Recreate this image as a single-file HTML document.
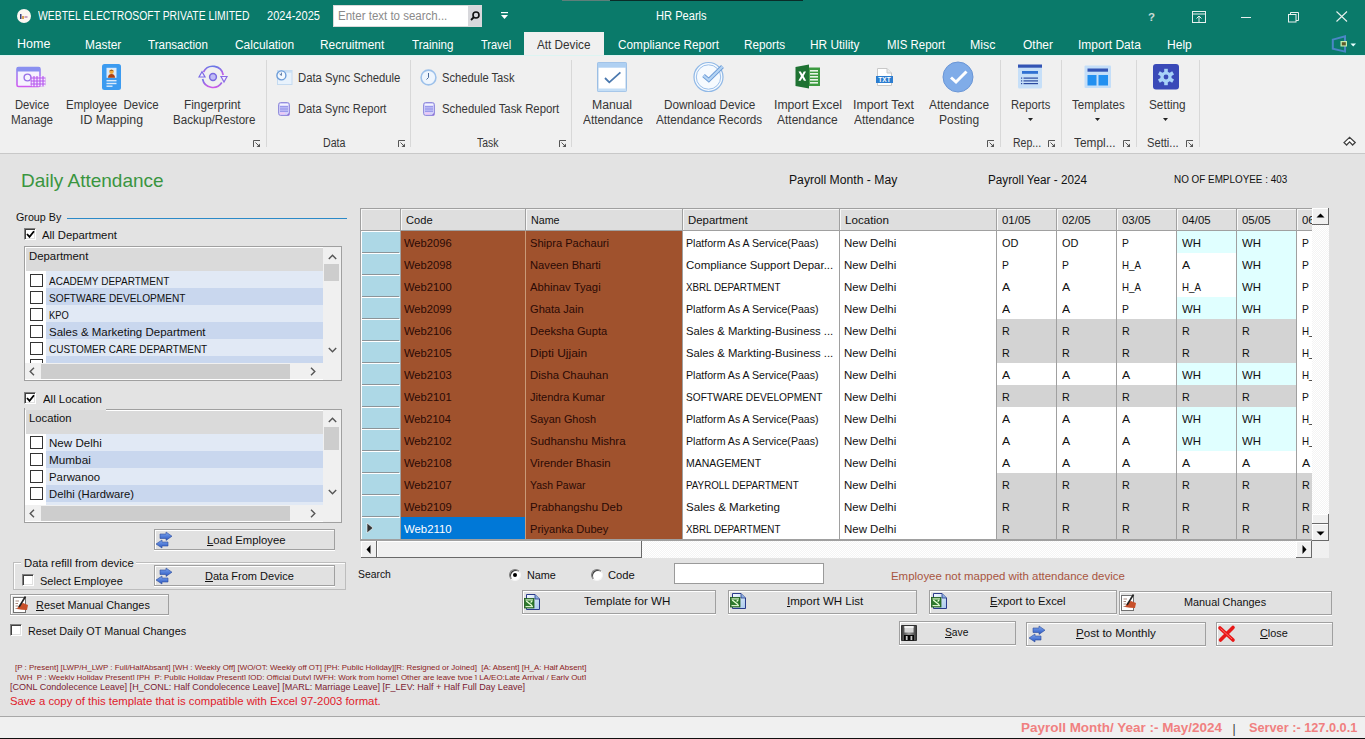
<!DOCTYPE html>
<html><head><meta charset="utf-8"><style>
html,body{margin:0;padding:0;}
body{width:1365px;height:739px;position:relative;overflow:hidden;background:#E3E3E3;font-family:"Liberation Sans",sans-serif;}
.a{position:absolute;box-sizing:border-box;}
.t{position:absolute;white-space:pre;line-height:1;transform-origin:0 0;}
u{text-decoration:underline;text-underline-offset:1px;}
svg{position:absolute;overflow:visible;}
</style></head><body>
<div class="a" style="left:0px;top:0px;width:1365px;height:55px;background:#0A7A6A;"></div>
<div class="a" style="left:562px;top:0px;width:48px;height:1px;background:#5E7F7A;"></div>
<div class="a" style="left:610px;top:0px;width:193px;height:1px;background:#0A2C28;"></div>
<div class="a" style="left:17px;top:9px;width:14px;height:14px;border-radius:50%;background:#FBF7F2;"></div>
<svg style="left:17px;top:9px" width="14" height="14"><rect x="3" y="5" width="1.5" height="5" fill="#3A3F7A"/><rect x="5" y="7" width="2" height="3" fill="#D9A050"/><rect x="7.5" y="7" width="3" height="2" fill="#C8A0C0"/></svg>
<div class="t" style="left:37.80px;top:10.18px;font-size:12.5px;color:#FFFFFF;transform:scaleX(0.8310);">WEBTEL ELECTROSOFT PRIVATE LIMITED</div>
<div class="t" style="left:267.00px;top:10.18px;font-size:12.5px;color:#FFFFFF;transform:scaleX(0.8859);">2024-2025</div>
<div class="a" style="left:333px;top:5px;width:149px;height:22px;background:#fff;border:1px solid #DADADA;"></div>
<div class="t" style="left:338.00px;top:10.30px;font-size:12px;color:#8A8A8A;transform:scaleX(0.9585);">Enter text to search...</div>
<div class="a" style="left:468px;top:6px;width:14px;height:20px;background:#D8D8DC;"></div>
<svg style="left:469px;top:10px" width="12" height="12"><circle cx="7" cy="5" r="3" fill="none" stroke="#111" stroke-width="1.6"/><line x1="5" y1="7" x2="2" y2="10" stroke="#111" stroke-width="1.8"/></svg>
<svg style="left:500px;top:12px" width="10" height="8"><rect x="1" y="0" width="7" height="1.2" fill="#fff"/><path d="M1 3 L8 3 L4.5 7 Z" fill="#fff"/></svg>
<div class="t" style="left:655.91px;top:10.38px;font-size:12.5px;color:#FFFFFF;transform:scaleX(0.8886);">HR Pearls</div>
<div class="t" style="left:1148.00px;top:11.72px;font-size:11.5px;color:#C8DAD6;font-weight:bold;transform:scaleX(1.0000);">?</div>
<svg style="left:1192px;top:11px" width="14" height="12"><rect x="0.5" y="0.5" width="13" height="11" fill="none" stroke="#E8F0EE" stroke-width="1"/><line x1="0.5" y1="3" x2="13.5" y2="3" stroke="#E8F0EE"/><line x1="7" y1="11" x2="7" y2="5" stroke="#E8F0EE"/><path d="M4.5 7.5 L7 5 L9.5 7.5" fill="none" stroke="#E8F0EE"/></svg>
<div class="a" style="left:1241px;top:17px;width:10px;height:1px;background:#E8F0EE;"></div>
<svg style="left:1288px;top:12px" width="11" height="11"><rect x="0.5" y="2.5" width="7.5" height="7.5" fill="none" stroke="#E8F0EE"/><path d="M2.5 2.5 V0.5 H10.5 V8.5 H8" fill="none" stroke="#E8F0EE"/></svg>
<svg style="left:1336px;top:11px" width="12" height="11"><path d="M0.5 0.5 L11 10.5 M11 0.5 L0.5 10.5" stroke="#E8F0EE" stroke-width="1.1"/></svg>
<div class="t" style="left:16.60px;top:38.38px;font-size:12.5px;color:#FFFFFF;transform:scaleX(1.0003);">Home</div>
<div class="t" style="left:84.75px;top:39.38px;font-size:12.5px;color:#FFFFFF;transform:scaleX(0.9503);">Master</div>
<div class="t" style="left:147.70px;top:39.38px;font-size:12.5px;color:#FFFFFF;transform:scaleX(0.9246);">Transaction</div>
<div class="t" style="left:234.70px;top:39.38px;font-size:12.5px;color:#FFFFFF;transform:scaleX(0.9549);">Calculation</div>
<div class="t" style="left:319.65px;top:39.38px;font-size:12.5px;color:#FFFFFF;transform:scaleX(0.9535);">Recruitment</div>
<div class="t" style="left:412.00px;top:39.38px;font-size:12.5px;color:#FFFFFF;transform:scaleX(0.9275);">Training</div>
<div class="t" style="left:481.00px;top:39.38px;font-size:12.5px;color:#FFFFFF;transform:scaleX(0.8809);">Travel</div>
<div class="t" style="left:617.60px;top:39.38px;font-size:12.5px;color:#FFFFFF;transform:scaleX(0.9431);">Compliance Report</div>
<div class="t" style="left:744.36px;top:39.38px;font-size:12.5px;color:#FFFFFF;transform:scaleX(0.9384);">Reports</div>
<div class="t" style="left:810.45px;top:39.38px;font-size:12.5px;color:#FFFFFF;transform:scaleX(0.9512);">HR Utility</div>
<div class="t" style="left:886.58px;top:39.38px;font-size:12.5px;color:#FFFFFF;transform:scaleX(0.9165);">MIS Report</div>
<div class="t" style="left:970.41px;top:39.38px;font-size:12.5px;color:#FFFFFF;transform:scaleX(0.9902);">Misc</div>
<div class="t" style="left:1022.50px;top:39.38px;font-size:12.5px;color:#FFFFFF;transform:scaleX(0.9582);">Other</div>
<div class="t" style="left:1077.84px;top:39.38px;font-size:12.5px;color:#FFFFFF;transform:scaleX(0.9619);">Import Data</div>
<div class="t" style="left:1166.93px;top:39.38px;font-size:12.5px;color:#FFFFFF;transform:scaleX(0.9654);">Help</div>
<div class="a" style="left:524px;top:32px;width:80px;height:23px;background:#F0F0F0;"></div>
<div class="t" style="left:537.20px;top:39.38px;font-size:12.5px;color:#333;transform:scaleX(0.9384);">Att Device</div>
<svg style="left:1331px;top:35px" width="28" height="18"><path d="M1.8 4.6 L14 1.2 L14 16.6 L1.8 13.8 Z" fill="none" stroke="#4A86C6" stroke-width="2"/><rect x="9.5" y="6" width="6.5" height="5.5" fill="#C4EEB0"/><rect x="10.8" y="7.2" width="4" height="3.2" fill="#5E5A2A"/><path d="M19.5 8.5 L25 8.5 L22.2 11.5 Z" fill="#E8FFFF"/></svg>
<div class="a" style="left:0px;top:55px;width:1365px;height:98px;background:#F0F0F0;"></div>
<div class="a" style="left:0px;top:153px;width:1365px;height:1px;background:#C8C8C8;"></div>
<div class="a" style="left:0px;top:55px;width:1365px;height:1px;background:#DCF4F2;"></div>
<div class="a" style="left:265.5px;top:60px;width:1px;height:87px;background:#D8D8D8;"></div>
<div class="a" style="left:410px;top:60px;width:1px;height:87px;background:#D8D8D8;"></div>
<div class="a" style="left:571px;top:60px;width:1px;height:87px;background:#D8D8D8;"></div>
<div class="a" style="left:999.5px;top:60px;width:1px;height:87px;background:#D8D8D8;"></div>
<div class="a" style="left:1061px;top:60px;width:1px;height:87px;background:#D8D8D8;"></div>
<div class="a" style="left:1135.5px;top:60px;width:1px;height:87px;background:#D8D8D8;"></div>
<div class="a" style="left:1198.5px;top:60px;width:1px;height:87px;background:#D8D8D8;"></div>
<svg style="left:253px;top:140px" width="8" height="8"><path d="M0.5 7 V0.5 H7" fill="none" stroke="#555" stroke-width="1"/><path d="M2.5 2.5 L6 6" stroke="#555" stroke-width="1"/><path d="M3.5 7 H7 V3.5 Z" fill="#555"/></svg>
<svg style="left:398px;top:140px" width="8" height="8"><path d="M0.5 7 V0.5 H7" fill="none" stroke="#555" stroke-width="1"/><path d="M2.5 2.5 L6 6" stroke="#555" stroke-width="1"/><path d="M3.5 7 H7 V3.5 Z" fill="#555"/></svg>
<svg style="left:559px;top:140px" width="8" height="8"><path d="M0.5 7 V0.5 H7" fill="none" stroke="#555" stroke-width="1"/><path d="M2.5 2.5 L6 6" stroke="#555" stroke-width="1"/><path d="M3.5 7 H7 V3.5 Z" fill="#555"/></svg>
<svg style="left:986.5px;top:140px" width="8" height="8"><path d="M0.5 7 V0.5 H7" fill="none" stroke="#555" stroke-width="1"/><path d="M2.5 2.5 L6 6" stroke="#555" stroke-width="1"/><path d="M3.5 7 H7 V3.5 Z" fill="#555"/></svg>
<svg style="left:1048px;top:140px" width="8" height="8"><path d="M0.5 7 V0.5 H7" fill="none" stroke="#555" stroke-width="1"/><path d="M2.5 2.5 L6 6" stroke="#555" stroke-width="1"/><path d="M3.5 7 H7 V3.5 Z" fill="#555"/></svg>
<svg style="left:1123px;top:140px" width="8" height="8"><path d="M0.5 7 V0.5 H7" fill="none" stroke="#555" stroke-width="1"/><path d="M2.5 2.5 L6 6" stroke="#555" stroke-width="1"/><path d="M3.5 7 H7 V3.5 Z" fill="#555"/></svg>
<svg style="left:1186px;top:140px" width="8" height="8"><path d="M0.5 7 V0.5 H7" fill="none" stroke="#555" stroke-width="1"/><path d="M2.5 2.5 L6 6" stroke="#555" stroke-width="1"/><path d="M3.5 7 H7 V3.5 Z" fill="#555"/></svg>
<div class="t" style="left:14.60px;top:98.70px;font-size:12px;color:#363636;transform:scaleX(0.9296);">Device</div>
<div class="t" style="left:10.60px;top:113.70px;font-size:12px;color:#363636;transform:scaleX(0.9704);">Manage</div>
<div class="t" style="left:66.30px;top:98.70px;font-size:12px;color:#363636;transform:scaleX(0.9574);">Employee  Device</div>
<div class="t" style="left:80.07px;top:113.70px;font-size:12px;color:#363636;transform:scaleX(1.0269);">ID Mapping</div>
<div class="t" style="left:184.40px;top:98.70px;font-size:12px;color:#363636;transform:scaleX(0.9875);">Fingerprint</div>
<div class="t" style="left:172.50px;top:113.70px;font-size:12px;color:#363636;transform:scaleX(0.9650);">Backup/Restore</div>
<div class="t" style="left:297.50px;top:72.20px;font-size:12px;color:#363636;transform:scaleX(0.9417);">Data Sync Schedule</div>
<div class="t" style="left:297.50px;top:102.60px;font-size:12px;color:#363636;transform:scaleX(0.9342);">Data Sync Report</div>
<div class="t" style="left:322.80px;top:137.10px;font-size:12px;color:#363636;transform:scaleX(0.8881);">Data</div>
<div class="t" style="left:442.40px;top:72.20px;font-size:12px;color:#363636;transform:scaleX(0.9311);">Schedule Task</div>
<div class="t" style="left:442.40px;top:102.60px;font-size:12px;color:#363636;transform:scaleX(0.9468);">Scheduled Task Report</div>
<div class="t" style="left:476.80px;top:137.10px;font-size:12px;color:#363636;transform:scaleX(0.8647);">Task</div>
<div class="t" style="left:592.00px;top:98.90px;font-size:12px;color:#363636;transform:scaleX(1.0183);">Manual</div>
<div class="t" style="left:582.60px;top:113.90px;font-size:12px;color:#363636;transform:scaleX(0.9895);">Attendance</div>
<div class="t" style="left:663.60px;top:98.90px;font-size:12px;color:#363636;transform:scaleX(0.9786);">Download Device</div>
<div class="t" style="left:656.00px;top:113.90px;font-size:12px;color:#363636;transform:scaleX(0.9767);">Attendance Records</div>
<div class="t" style="left:773.78px;top:98.90px;font-size:12px;color:#363636;transform:scaleX(1.0182);">Import Excel</div>
<div class="t" style="left:777.30px;top:113.90px;font-size:12px;color:#363636;transform:scaleX(1.0010);">Attendance</div>
<div class="t" style="left:853.17px;top:98.90px;font-size:12px;color:#363636;transform:scaleX(1.0302);">Import Text</div>
<div class="t" style="left:854.20px;top:113.90px;font-size:12px;color:#363636;transform:scaleX(0.9961);">Attendance</div>
<div class="t" style="left:928.50px;top:98.90px;font-size:12px;color:#363636;transform:scaleX(0.9911);">Attendance</div>
<div class="t" style="left:938.60px;top:113.90px;font-size:12px;color:#363636;transform:scaleX(1.0012);">Posting</div>
<div class="t" style="left:1010.60px;top:98.80px;font-size:12px;color:#363636;transform:scaleX(0.9353);">Reports</div>
<div class="t" style="left:1012.50px;top:136.70px;font-size:12px;color:#363636;transform:scaleX(0.8775);">Rep...</div>
<div class="t" style="left:1071.90px;top:98.80px;font-size:12px;color:#363636;transform:scaleX(0.9636);">Templates</div>
<div class="t" style="left:1073.80px;top:136.70px;font-size:12px;color:#363636;transform:scaleX(0.9885);">Templ...</div>
<div class="t" style="left:1148.50px;top:98.80px;font-size:12px;color:#363636;transform:scaleX(0.9813);">Setting</div>
<div class="t" style="left:1147.40px;top:136.70px;font-size:12px;color:#363636;transform:scaleX(0.9293);">Setti...</div>
<svg style="left:1027.5px;top:118px" width="6" height="4"><path d="M0 0 H5 L2.5 3 Z" fill="#222"/></svg>
<svg style="left:1094.5px;top:118px" width="6" height="4"><path d="M0 0 H5 L2.5 3 Z" fill="#222"/></svg>
<svg style="left:1162.5px;top:118px" width="6" height="4"><path d="M0 0 H5 L2.5 3 Z" fill="#222"/></svg>
<svg style="left:1340px;top:133px" width="20" height="16"><path d="M4 9.6 L9.6 4.3 L15.2 9.6 L12.6 12 L9.6 8.9 L6.6 12 Z" fill="#fff" stroke="#404040" stroke-width="1.3"/></svg>
<div class="t" style="left:20.77px;top:172.08px;font-size:18.5px;color:#3A953F;transform:scaleX(1.0269);">Daily Attendance</div>
<div class="t" style="left:789.40px;top:174.00px;font-size:12px;color:#111;transform:scaleX(1.0150);">Payroll Month - May</div>
<div class="t" style="left:987.50px;top:174.00px;font-size:12px;color:#111;transform:scaleX(0.9760);">Payroll Year - 2024</div>
<div class="t" style="left:1174.40px;top:174.22px;font-size:11.5px;color:#111;transform:scaleX(0.8594);">NO OF EMPLOYEE : 403</div>
<div class="t" style="left:16.20px;top:212.22px;font-size:11.5px;color:#111;transform:scaleX(0.9319);">Group By</div>
<div class="a" style="left:67px;top:218px;width:280px;height:1px;background:#2C8AC8;"></div>
<div class="a" style="left:24px;top:228px;width:12px;height:12px;background:#fff;border-top:1px solid #808080;border-left:1px solid #808080;border-bottom:1px solid #fff;border-right:1px solid #fff;box-shadow:inset 1px 1px 0 #404040, inset -1px -1px 0 #E0E0E0;"></div>
<svg style="left:26px;top:230px" width="9" height="9"><path d="M1 4 L3.5 6.8 L8 1.2" fill="none" stroke="#000" stroke-width="1.8"/></svg>
<div class="t" style="left:42.40px;top:230.22px;font-size:11.5px;color:#111;transform:scaleX(0.9836);">All Department</div>
<div class="a" style="left:24px;top:246px;width:318px;height:135px;background:#fff;border:1px solid #A0A0A0;"></div>
<div class="a" style="left:26px;top:248px;width:297px;height:23px;background:#DADADA;"></div>
<div class="t" style="left:28.80px;top:250.72px;font-size:11.5px;color:#111;transform:scaleX(0.9871);">Department</div>
<div class="a" style="left:46px;top:271px;width:277px;height:17px;background:#E1E9F5;"></div>
<div class="a" style="left:30px;top:274px;width:13px;height:13px;background:#fff;border:1px solid #333;"></div>
<div class="t" style="left:48.60px;top:275.73px;font-size:11.5px;color:#111;transform:scaleX(0.8712);">ACADEMY DEPARTMENT</div>
<div class="a" style="left:46px;top:288px;width:277px;height:17px;background:#C9D7EE;"></div>
<div class="a" style="left:30px;top:291px;width:13px;height:13px;background:#fff;border:1px solid #333;"></div>
<div class="t" style="left:48.60px;top:292.73px;font-size:11.5px;color:#111;transform:scaleX(0.8817);">SOFTWARE DEVELOPMENT</div>
<div class="a" style="left:46px;top:305px;width:277px;height:17px;background:#E1E9F5;"></div>
<div class="a" style="left:30px;top:308px;width:13px;height:13px;background:#fff;border:1px solid #333;"></div>
<div class="t" style="left:48.60px;top:309.73px;font-size:11.5px;color:#111;transform:scaleX(0.8134);">KPO</div>
<div class="a" style="left:46px;top:322px;width:277px;height:17px;background:#C9D7EE;"></div>
<div class="a" style="left:30px;top:325px;width:13px;height:13px;background:#fff;border:1px solid #333;"></div>
<div class="t" style="left:48.60px;top:326.73px;font-size:11.5px;color:#111;transform:scaleX(0.9993);">Sales &amp; Marketing Department</div>
<div class="a" style="left:46px;top:339px;width:277px;height:17px;background:#E1E9F5;"></div>
<div class="a" style="left:30px;top:342px;width:13px;height:13px;background:#fff;border:1px solid #333;"></div>
<div class="t" style="left:48.60px;top:343.73px;font-size:11.5px;color:#111;transform:scaleX(0.8689);">CUSTOMER CARE DEPARTMENT</div>
<div class="a" style="left:46px;top:356px;width:277px;height:7px;background:#C9D7EE;"></div>
<div class="a" style="left:30px;top:359px;width:13px;height:4px;background:#fff;border:1px solid #333;border-bottom:0;"></div>
<div class="a" style="left:323px;top:247px;width:18px;height:117px;background:#F0F0F0;"></div>
<div class="a" style="left:324px;top:264px;width:15px;height:17px;background:#CDCDCD;"></div>
<svg style="left:328px;top:254px" width="9" height="6"><path d="M0.8 5 L4.5 1.2 L8.2 5" fill="none" stroke="#555" stroke-width="1.4"/></svg>
<svg style="left:328px;top:347px" width="9" height="6"><path d="M0.8 1 L4.5 4.8 L8.2 1" fill="none" stroke="#555" stroke-width="1.4"/></svg>
<div class="a" style="left:25px;top:363px;width:298px;height:16px;background:#F0F0F0;"></div>
<div class="a" style="left:41px;top:364px;width:249px;height:15px;background:#CDCDCD;"></div>
<div class="a" style="left:323px;top:363px;width:18px;height:17px;background:#F0F0F0;"></div>
<svg style="left:29px;top:367px" width="6" height="9"><path d="M5 0.8 L1.2 4.5 L5 8.2" fill="none" stroke="#555" stroke-width="1.4"/></svg>
<svg style="left:310px;top:367px" width="6" height="9"><path d="M1 0.8 L4.8 4.5 L1 8.2" fill="none" stroke="#555" stroke-width="1.4"/></svg>
<div class="a" style="left:24px;top:392px;width:12px;height:12px;background:#fff;border-top:1px solid #808080;border-left:1px solid #808080;border-bottom:1px solid #fff;border-right:1px solid #fff;box-shadow:inset 1px 1px 0 #404040, inset -1px -1px 0 #E0E0E0;"></div>
<svg style="left:26px;top:394px" width="9" height="9"><path d="M1 4 L3.5 6.8 L8 1.2" fill="none" stroke="#000" stroke-width="1.8"/></svg>
<div class="t" style="left:42.50px;top:393.93px;font-size:11.5px;color:#111;transform:scaleX(0.9905);">All Location</div>
<div class="a" style="left:24px;top:409px;width:318px;height:114px;background:#fff;border:1px solid #A0A0A0;"></div>
<div class="a" style="left:26px;top:411px;width:297px;height:23px;background:#DADADA;"></div>
<div class="t" style="left:28.80px;top:412.73px;font-size:11.5px;color:#111;transform:scaleX(0.9795);">Location</div>
<div class="a" style="left:46px;top:434px;width:277px;height:17px;background:#E1E9F5;"></div>
<div class="a" style="left:30px;top:436px;width:13px;height:13px;background:#fff;border:1px solid #333;"></div>
<div class="t" style="left:48.60px;top:437.73px;font-size:11.5px;color:#111;transform:scaleX(1.0067);">New Delhi</div>
<div class="a" style="left:46px;top:451px;width:277px;height:17px;background:#C9D7EE;"></div>
<div class="a" style="left:30px;top:453px;width:13px;height:13px;background:#fff;border:1px solid #333;"></div>
<div class="t" style="left:48.60px;top:454.73px;font-size:11.5px;color:#111;transform:scaleX(1.0212);">Mumbai</div>
<div class="a" style="left:46px;top:468px;width:277px;height:17px;background:#E1E9F5;"></div>
<div class="a" style="left:30px;top:470px;width:13px;height:13px;background:#fff;border:1px solid #333;"></div>
<div class="t" style="left:48.60px;top:471.73px;font-size:11.5px;color:#111;transform:scaleX(0.9866);">Parwanoo</div>
<div class="a" style="left:46px;top:485px;width:277px;height:17px;background:#C9D7EE;"></div>
<div class="a" style="left:30px;top:487px;width:13px;height:13px;background:#fff;border:1px solid #333;"></div>
<div class="t" style="left:48.60px;top:488.73px;font-size:11.5px;color:#111;transform:scaleX(0.9784);">Delhi (Hardware)</div>
<div class="a" style="left:46px;top:502px;width:277px;height:3px;background:#E1E9F5;"></div>
<div class="a" style="left:30px;top:505px;width:13px;height:0px;background:#fff;border:1px solid #333;border-bottom:0;"></div>
<div class="a" style="left:323px;top:410px;width:18px;height:96px;background:#F0F0F0;"></div>
<div class="a" style="left:324px;top:427px;width:15px;height:23px;background:#CDCDCD;"></div>
<svg style="left:328px;top:417px" width="9" height="6"><path d="M0.8 5 L4.5 1.2 L8.2 5" fill="none" stroke="#555" stroke-width="1.4"/></svg>
<svg style="left:328px;top:489px" width="9" height="6"><path d="M0.8 1 L4.5 4.8 L8.2 1" fill="none" stroke="#555" stroke-width="1.4"/></svg>
<div class="a" style="left:25px;top:505px;width:298px;height:16px;background:#F0F0F0;"></div>
<div class="a" style="left:41px;top:506px;width:249px;height:15px;background:#CDCDCD;"></div>
<div class="a" style="left:323px;top:505px;width:18px;height:17px;background:#F0F0F0;"></div>
<svg style="left:29px;top:509px" width="6" height="9"><path d="M5 0.8 L1.2 4.5 L5 8.2" fill="none" stroke="#555" stroke-width="1.4"/></svg>
<svg style="left:310px;top:509px" width="6" height="9"><path d="M1 0.8 L4.8 4.5 L1 8.2" fill="none" stroke="#555" stroke-width="1.4"/></svg>
<div class="a" style="left:24px;top:408px;width:82px;height:2px;background:#E3E3E3;"></div>
<div class="a" style="left:26px;top:410px;width:80px;height:1px;background:#DADADA;"></div>
<div class="a" style="left:24px;top:408px;width:1px;height:3px;background:#A0A0A0;"></div>
<div class="a" style="left:154px;top:529px;width:181px;height:22px;border-bottom:1px solid #fff;"></div>
<div class="a" style="left:154px;top:529px;width:181px;height:21px;background:#E1E1E1;border:1px solid #A0A0A0;box-shadow:inset 1px 1px 0 #fff;"></div>
<div class="t" style="left:207.20px;top:535.23px;font-size:11.5px;color:#111;transform:scaleX(0.9834);"><u>L</u>oad Employee</div>
<svg style="left:156px;top:532px" width="17" height="17"><defs><linearGradient id="ag156532" x1="0" y1="0" x2="0" y2="1"><stop offset="0" stop-color="#7FA8F0"/><stop offset="1" stop-color="#2A56C0"/></linearGradient></defs>
    <path d="M4 2 H10 V0 L16 4.2 L10 8.4 V6.5 H4 Z" fill="url(#ag156532)" stroke="#2C4C9A" stroke-width="0.6"/>
    <path d="M12 10 H6 V8 L0 12 L6 16 V14 H12 Z" fill="url(#ag156532)" stroke="#2C4C9A" stroke-width="0.6"/></svg>
<div class="a" style="left:13px;top:562px;width:333px;height:28px;border:1px solid #BDBDBD;box-shadow:1px 1px 0 #fff inset;"></div>
<div class="a" style="left:21px;top:558px;width:115px;height:8px;background:#E3E3E3;"></div>
<div class="t" style="left:23.70px;top:558.23px;font-size:11.5px;color:#111;transform:scaleX(0.9864);">Data refill from device</div>
<div class="a" style="left:22px;top:574px;width:12px;height:12px;background:#fff;border-top:1px solid #808080;border-left:1px solid #808080;border-bottom:1px solid #fff;border-right:1px solid #fff;box-shadow:inset 1px 1px 0 #404040, inset -1px -1px 0 #E0E0E0;"></div>
<div class="t" style="left:40.20px;top:576.23px;font-size:11.5px;color:#111;transform:scaleX(0.9604);">Select Employee</div>
<div class="a" style="left:154px;top:565px;width:181px;height:22px;border-bottom:1px solid #fff;"></div>
<div class="a" style="left:154px;top:565px;width:181px;height:21px;background:#E1E1E1;border:1px solid #A0A0A0;box-shadow:inset 1px 1px 0 #fff;"></div>
<div class="t" style="left:204.60px;top:571.42px;font-size:11.5px;color:#111;transform:scaleX(0.9581);"><u>D</u>ata From Device</div>
<svg style="left:156px;top:568px" width="17" height="17"><defs><linearGradient id="ag156568" x1="0" y1="0" x2="0" y2="1"><stop offset="0" stop-color="#7FA8F0"/><stop offset="1" stop-color="#2A56C0"/></linearGradient></defs>
    <path d="M4 2 H10 V0 L16 4.2 L10 8.4 V6.5 H4 Z" fill="url(#ag156568)" stroke="#2C4C9A" stroke-width="0.6"/>
    <path d="M12 10 H6 V8 L0 12 L6 16 V14 H12 Z" fill="url(#ag156568)" stroke="#2C4C9A" stroke-width="0.6"/></svg>
<div class="a" style="left:10px;top:594px;width:159px;height:22px;border-bottom:1px solid #fff;"></div>
<div class="a" style="left:10px;top:594px;width:159px;height:21px;background:#E1E1E1;border:1px solid #A0A0A0;box-shadow:inset 1px 1px 0 #fff;"></div>
<div class="t" style="left:36.30px;top:599.62px;font-size:11.5px;color:#111;transform:scaleX(0.9474);"><u>R</u>eset Manual Changes</div>
<div class="a" style="left:10px;top:624px;width:12px;height:12px;background:#fff;border-top:1px solid #808080;border-left:1px solid #808080;border-bottom:1px solid #fff;border-right:1px solid #fff;box-shadow:inset 1px 1px 0 #404040, inset -1px -1px 0 #E0E0E0;"></div>
<div class="t" style="left:28.40px;top:625.62px;font-size:11.5px;color:#111;transform:scaleX(0.9415);">Reset Daily OT Manual Changes</div>
<div class="t" style="left:14.70px;top:664.20px;font-size:8px;color:#8B1C1C;transform:scaleX(0.9890);">[P : Present] [LWP/H_LWP : Full/HalfAbsant] [WH : Weekly Off] [WO/OT: Weekly off OT] [PH: Public Holiday][R: Resigned or Joined]  [A: Absent] [H_A: Half Absent]</div>
<div class="a" style="left:0;top:670px;width:600px;height:10px;overflow:hidden;">
<div class="t" style="left:16.80px;top:4.40px;font-size:8px;color:#8B1C1C;transform:scaleX(0.9895);">[WH_P : Weekly Holiday Present] [PH_P: Public Holiday Present] [OD: Official Duty] [WFH: Work from home] Other are leave type ] LA/EO:Late Arrival / Early Out]</div>
</div>
<div class="t" style="left:10.30px;top:681.72px;font-size:9.5px;color:#7A2030;transform:scaleX(0.9504);">[CONL Condolecence Leave] [H_CONL: Half Condolecence Leave] [MARL: Marriage Leave] [F_LEV: Half + Half Full Day Leave]</div>
<div class="t" style="left:10.30px;top:695.82px;font-size:10.8px;color:#E0202A;transform:scaleX(1.0487);">Save a copy of this template that is compatible with Excel 97-2003 format.</div>
<div class="a" style="left:0px;top:716px;width:1365px;height:1px;background:#A8A8A8;"></div>
<div class="a" style="left:0px;top:717px;width:1365px;height:21px;background:#F0F0F0;"></div>
<div class="a" style="left:0px;top:738px;width:1365px;height:1px;background:#101010;"></div>
<div class="t" style="left:1020.70px;top:721.98px;font-size:12.5px;color:#F08080;font-weight:bold;transform:scaleX(1.0769);">Payroll Month/ Year :- May/2024</div>
<div class="t" style="left:1232.50px;top:722.80px;font-size:12px;color:#333;transform:scaleX(1.0000);">|</div>
<div class="t" style="left:1248.70px;top:721.98px;font-size:12.5px;color:#F08080;font-weight:bold;transform:scaleX(1.0181);">Server :- 127.0.0.1</div>
<div style="position:absolute;left:0;top:0;width:1312px;height:541px;overflow:hidden">
<div class="a" style="left:360px;top:208px;width:952px;height:333px;background:#fff;"></div>
<div class="a" style="left:360px;top:208px;width:952px;height:1px;background:#A0A0A0;"></div>
<div class="a" style="left:360px;top:208px;width:1px;height:333px;background:#A0A0A0;"></div>
<div class="a" style="left:360px;top:539px;width:952px;height:2px;background:#A0A0A0;"></div>
<div class="a" style="left:361px;top:209px;width:951px;height:21px;background:#DEDEDE;"></div>
<div class="a" style="left:361px;top:230px;width:951px;height:1px;background:#A0A0A0;"></div>
<div class="a" style="left:361px;top:209px;width:1px;height:21px;background:#F8F8F8;"></div>
<div class="a" style="left:401px;top:209px;width:1px;height:21px;background:#F8F8F8;"></div>
<div class="a" style="left:526px;top:209px;width:1px;height:21px;background:#F8F8F8;"></div>
<div class="a" style="left:683px;top:209px;width:1px;height:21px;background:#F8F8F8;"></div>
<div class="a" style="left:840px;top:209px;width:1px;height:21px;background:#F8F8F8;"></div>
<div class="a" style="left:997px;top:209px;width:1px;height:21px;background:#F8F8F8;"></div>
<div class="a" style="left:1057px;top:209px;width:1px;height:21px;background:#F8F8F8;"></div>
<div class="a" style="left:1117px;top:209px;width:1px;height:21px;background:#F8F8F8;"></div>
<div class="a" style="left:1177px;top:209px;width:1px;height:21px;background:#F8F8F8;"></div>
<div class="a" style="left:1237px;top:209px;width:1px;height:21px;background:#F8F8F8;"></div>
<div class="a" style="left:1297px;top:209px;width:1px;height:21px;background:#F8F8F8;"></div>
<div class="a" style="left:361px;top:209px;width:951px;height:1px;background:#F4F4F4;"></div>
<div class="a" style="left:401px;top:231px;width:281px;height:308px;background:#A0522D;"></div>
<div class="a" style="left:361px;top:231px;width:40px;height:22px;background:#ADD8E6;border-top:1px solid #fff;border-left:1px solid #fff;"></div>
<div class="a" style="left:362px;top:252px;width:37px;height:1px;background:#8C9498;"></div>
<div class="a" style="left:996px;top:231px;width:61px;height:22px;background:#fff;"></div>
<div class="a" style="left:1056px;top:231px;width:61px;height:22px;background:#fff;"></div>
<div class="a" style="left:1116px;top:231px;width:61px;height:22px;background:#fff;"></div>
<div class="a" style="left:1176px;top:231px;width:61px;height:22px;background:#E0FFFF;"></div>
<div class="a" style="left:1236px;top:231px;width:61px;height:22px;background:#E0FFFF;"></div>
<div class="a" style="left:1296px;top:231px;width:61px;height:22px;background:#fff;"></div>
<div class="t" style="left:403.70px;top:238.32px;font-size:11.5px;color:#2B0A05;transform:scaleX(0.9727);">Web2096</div>
<div class="t" style="left:529.70px;top:238.32px;font-size:11.5px;color:#2B0A05;transform:scaleX(0.9659);">Shipra Pachauri</div>
<div class="t" style="left:686.30px;top:238.32px;font-size:11.5px;color:#111;transform:scaleX(0.9220);">Platform As A Service(Paas)</div>
<div class="t" style="left:843.60px;top:238.32px;font-size:11.5px;color:#111;transform:scaleX(0.9971);">New Delhi</div>
<div class="t" style="left:1001.50px;top:238.32px;font-size:11.5px;color:#111;transform:scaleX(0.9560);">OD</div>
<div class="t" style="left:1061.50px;top:238.32px;font-size:11.5px;color:#111;transform:scaleX(0.9560);">OD</div>
<div class="t" style="left:1121.50px;top:238.32px;font-size:11.5px;color:#111;transform:scaleX(0.9000);">P</div>
<div class="t" style="left:1181.50px;top:238.32px;font-size:11.5px;color:#111;transform:scaleX(0.9918);">WH</div>
<div class="t" style="left:1241.50px;top:238.32px;font-size:11.5px;color:#111;transform:scaleX(0.9918);">WH</div>
<div class="t" style="left:1301.50px;top:238.32px;font-size:11.5px;color:#111;transform:scaleX(0.9000);">P</div>
<div class="a" style="left:361px;top:253px;width:40px;height:22px;background:#ADD8E6;border-top:1px solid #fff;border-left:1px solid #fff;"></div>
<div class="a" style="left:362px;top:274px;width:37px;height:1px;background:#8C9498;"></div>
<div class="a" style="left:996px;top:253px;width:61px;height:22px;background:#fff;"></div>
<div class="a" style="left:1056px;top:253px;width:61px;height:22px;background:#fff;"></div>
<div class="a" style="left:1116px;top:253px;width:61px;height:22px;background:#fff;"></div>
<div class="a" style="left:1176px;top:253px;width:61px;height:22px;background:#fff;"></div>
<div class="a" style="left:1236px;top:253px;width:61px;height:22px;background:#E0FFFF;"></div>
<div class="a" style="left:1296px;top:253px;width:61px;height:22px;background:#fff;"></div>
<div class="t" style="left:403.70px;top:260.33px;font-size:11.5px;color:#2B0A05;transform:scaleX(0.9727);">Web2098</div>
<div class="t" style="left:529.70px;top:260.33px;font-size:11.5px;color:#2B0A05;transform:scaleX(0.9721);">Naveen Bharti</div>
<div class="t" style="left:686.30px;top:260.33px;font-size:11.5px;color:#111;transform:scaleX(0.9968);">Compliance Support Depar...</div>
<div class="t" style="left:843.60px;top:260.33px;font-size:11.5px;color:#111;transform:scaleX(0.9971);">New Delhi</div>
<div class="t" style="left:1001.50px;top:260.33px;font-size:11.5px;color:#111;transform:scaleX(0.9000);">P</div>
<div class="t" style="left:1061.50px;top:260.33px;font-size:11.5px;color:#111;transform:scaleX(0.9000);">P</div>
<div class="t" style="left:1121.50px;top:260.33px;font-size:11.5px;color:#111;transform:scaleX(0.8458);">H_A</div>
<div class="t" style="left:1181.50px;top:260.33px;font-size:11.5px;color:#111;transform:scaleX(1.0625);">A</div>
<div class="t" style="left:1241.50px;top:260.33px;font-size:11.5px;color:#111;transform:scaleX(0.9918);">WH</div>
<div class="t" style="left:1301.50px;top:260.33px;font-size:11.5px;color:#111;transform:scaleX(0.9000);">P</div>
<div class="a" style="left:361px;top:275px;width:40px;height:22px;background:#ADD8E6;border-top:1px solid #fff;border-left:1px solid #fff;"></div>
<div class="a" style="left:362px;top:296px;width:37px;height:1px;background:#8C9498;"></div>
<div class="a" style="left:996px;top:275px;width:61px;height:22px;background:#fff;"></div>
<div class="a" style="left:1056px;top:275px;width:61px;height:22px;background:#fff;"></div>
<div class="a" style="left:1116px;top:275px;width:61px;height:22px;background:#fff;"></div>
<div class="a" style="left:1176px;top:275px;width:61px;height:22px;background:#fff;"></div>
<div class="a" style="left:1236px;top:275px;width:61px;height:22px;background:#E0FFFF;"></div>
<div class="a" style="left:1296px;top:275px;width:61px;height:22px;background:#fff;"></div>
<div class="t" style="left:403.70px;top:282.33px;font-size:11.5px;color:#2B0A05;transform:scaleX(0.9727);">Web2100</div>
<div class="t" style="left:529.70px;top:282.33px;font-size:11.5px;color:#2B0A05;transform:scaleX(0.9807);">Abhinav Tyagi</div>
<div class="t" style="left:686.30px;top:282.33px;font-size:11.5px;color:#111;transform:scaleX(0.8503);">XBRL DEPARTMENT</div>
<div class="t" style="left:843.60px;top:282.33px;font-size:11.5px;color:#111;transform:scaleX(0.9971);">New Delhi</div>
<div class="t" style="left:1001.50px;top:282.33px;font-size:11.5px;color:#111;transform:scaleX(1.0625);">A</div>
<div class="t" style="left:1061.50px;top:282.33px;font-size:11.5px;color:#111;transform:scaleX(1.0625);">A</div>
<div class="t" style="left:1121.50px;top:282.33px;font-size:11.5px;color:#111;transform:scaleX(0.8458);">H_A</div>
<div class="t" style="left:1181.50px;top:282.33px;font-size:11.5px;color:#111;transform:scaleX(0.8458);">H_A</div>
<div class="t" style="left:1241.50px;top:282.33px;font-size:11.5px;color:#111;transform:scaleX(0.9918);">WH</div>
<div class="t" style="left:1301.50px;top:282.33px;font-size:11.5px;color:#111;transform:scaleX(0.9000);">P</div>
<div class="a" style="left:361px;top:297px;width:40px;height:22px;background:#ADD8E6;border-top:1px solid #fff;border-left:1px solid #fff;"></div>
<div class="a" style="left:362px;top:318px;width:37px;height:1px;background:#8C9498;"></div>
<div class="a" style="left:996px;top:297px;width:61px;height:22px;background:#fff;"></div>
<div class="a" style="left:1056px;top:297px;width:61px;height:22px;background:#fff;"></div>
<div class="a" style="left:1116px;top:297px;width:61px;height:22px;background:#fff;"></div>
<div class="a" style="left:1176px;top:297px;width:61px;height:22px;background:#E0FFFF;"></div>
<div class="a" style="left:1236px;top:297px;width:61px;height:22px;background:#E0FFFF;"></div>
<div class="a" style="left:1296px;top:297px;width:61px;height:22px;background:#fff;"></div>
<div class="t" style="left:403.70px;top:304.33px;font-size:11.5px;color:#2B0A05;transform:scaleX(0.9727);">Web2099</div>
<div class="t" style="left:529.70px;top:304.33px;font-size:11.5px;color:#2B0A05;transform:scaleX(0.9652);">Ghata Jain</div>
<div class="t" style="left:686.30px;top:304.33px;font-size:11.5px;color:#111;transform:scaleX(0.9220);">Platform As A Service(Paas)</div>
<div class="t" style="left:843.60px;top:304.33px;font-size:11.5px;color:#111;transform:scaleX(0.9971);">New Delhi</div>
<div class="t" style="left:1001.50px;top:304.33px;font-size:11.5px;color:#111;transform:scaleX(1.0625);">A</div>
<div class="t" style="left:1061.50px;top:304.33px;font-size:11.5px;color:#111;transform:scaleX(1.0625);">A</div>
<div class="t" style="left:1121.50px;top:304.33px;font-size:11.5px;color:#111;transform:scaleX(0.9000);">P</div>
<div class="t" style="left:1181.50px;top:304.33px;font-size:11.5px;color:#111;transform:scaleX(0.9918);">WH</div>
<div class="t" style="left:1241.50px;top:304.33px;font-size:11.5px;color:#111;transform:scaleX(0.9918);">WH</div>
<div class="t" style="left:1301.50px;top:304.33px;font-size:11.5px;color:#111;transform:scaleX(0.9000);">P</div>
<div class="a" style="left:361px;top:319px;width:40px;height:22px;background:#ADD8E6;border-top:1px solid #fff;border-left:1px solid #fff;"></div>
<div class="a" style="left:362px;top:340px;width:37px;height:1px;background:#8C9498;"></div>
<div class="a" style="left:996px;top:319px;width:61px;height:22px;background:#D3D3D3;"></div>
<div class="a" style="left:1056px;top:319px;width:61px;height:22px;background:#D3D3D3;"></div>
<div class="a" style="left:1116px;top:319px;width:61px;height:22px;background:#D3D3D3;"></div>
<div class="a" style="left:1176px;top:319px;width:61px;height:22px;background:#D3D3D3;"></div>
<div class="a" style="left:1236px;top:319px;width:61px;height:22px;background:#D3D3D3;"></div>
<div class="a" style="left:1296px;top:319px;width:61px;height:22px;background:#fff;"></div>
<div class="t" style="left:403.70px;top:326.33px;font-size:11.5px;color:#2B0A05;transform:scaleX(0.9727);">Web2106</div>
<div class="t" style="left:529.70px;top:326.33px;font-size:11.5px;color:#2B0A05;transform:scaleX(0.9663);">Deeksha Gupta</div>
<div class="t" style="left:686.30px;top:326.33px;font-size:11.5px;color:#111;transform:scaleX(0.9800);">Sales &amp; Markting-Business ...</div>
<div class="t" style="left:843.60px;top:326.33px;font-size:11.5px;color:#111;transform:scaleX(0.9971);">New Delhi</div>
<div class="t" style="left:1001.50px;top:326.33px;font-size:11.5px;color:#111;transform:scaleX(0.9375);">R</div>
<div class="t" style="left:1061.50px;top:326.33px;font-size:11.5px;color:#111;transform:scaleX(0.9375);">R</div>
<div class="t" style="left:1121.50px;top:326.33px;font-size:11.5px;color:#111;transform:scaleX(0.9375);">R</div>
<div class="t" style="left:1181.50px;top:326.33px;font-size:11.5px;color:#111;transform:scaleX(0.9375);">R</div>
<div class="t" style="left:1241.50px;top:326.33px;font-size:11.5px;color:#111;transform:scaleX(0.9375);">R</div>
<div class="t" style="left:1301.50px;top:326.33px;font-size:11.5px;color:#111;transform:scaleX(0.8494);">H_</div>
<div class="a" style="left:361px;top:341px;width:40px;height:22px;background:#ADD8E6;border-top:1px solid #fff;border-left:1px solid #fff;"></div>
<div class="a" style="left:362px;top:362px;width:37px;height:1px;background:#8C9498;"></div>
<div class="a" style="left:996px;top:341px;width:61px;height:22px;background:#D3D3D3;"></div>
<div class="a" style="left:1056px;top:341px;width:61px;height:22px;background:#D3D3D3;"></div>
<div class="a" style="left:1116px;top:341px;width:61px;height:22px;background:#D3D3D3;"></div>
<div class="a" style="left:1176px;top:341px;width:61px;height:22px;background:#D3D3D3;"></div>
<div class="a" style="left:1236px;top:341px;width:61px;height:22px;background:#D3D3D3;"></div>
<div class="a" style="left:1296px;top:341px;width:61px;height:22px;background:#fff;"></div>
<div class="t" style="left:403.70px;top:348.33px;font-size:11.5px;color:#2B0A05;transform:scaleX(0.9727);">Web2105</div>
<div class="t" style="left:529.70px;top:348.33px;font-size:11.5px;color:#2B0A05;transform:scaleX(1.0391);">Dipti Ujjain</div>
<div class="t" style="left:686.30px;top:348.33px;font-size:11.5px;color:#111;transform:scaleX(0.9800);">Sales &amp; Markting-Business ...</div>
<div class="t" style="left:843.60px;top:348.33px;font-size:11.5px;color:#111;transform:scaleX(0.9971);">New Delhi</div>
<div class="t" style="left:1001.50px;top:348.33px;font-size:11.5px;color:#111;transform:scaleX(0.9375);">R</div>
<div class="t" style="left:1061.50px;top:348.33px;font-size:11.5px;color:#111;transform:scaleX(0.9375);">R</div>
<div class="t" style="left:1121.50px;top:348.33px;font-size:11.5px;color:#111;transform:scaleX(0.9375);">R</div>
<div class="t" style="left:1181.50px;top:348.33px;font-size:11.5px;color:#111;transform:scaleX(0.9375);">R</div>
<div class="t" style="left:1241.50px;top:348.33px;font-size:11.5px;color:#111;transform:scaleX(0.9375);">R</div>
<div class="t" style="left:1301.50px;top:348.33px;font-size:11.5px;color:#111;transform:scaleX(0.8494);">H_</div>
<div class="a" style="left:361px;top:363px;width:40px;height:22px;background:#ADD8E6;border-top:1px solid #fff;border-left:1px solid #fff;"></div>
<div class="a" style="left:362px;top:384px;width:37px;height:1px;background:#8C9498;"></div>
<div class="a" style="left:996px;top:363px;width:61px;height:22px;background:#fff;"></div>
<div class="a" style="left:1056px;top:363px;width:61px;height:22px;background:#fff;"></div>
<div class="a" style="left:1116px;top:363px;width:61px;height:22px;background:#fff;"></div>
<div class="a" style="left:1176px;top:363px;width:61px;height:22px;background:#E0FFFF;"></div>
<div class="a" style="left:1236px;top:363px;width:61px;height:22px;background:#E0FFFF;"></div>
<div class="a" style="left:1296px;top:363px;width:61px;height:22px;background:#fff;"></div>
<div class="t" style="left:403.70px;top:370.33px;font-size:11.5px;color:#2B0A05;transform:scaleX(0.9727);">Web2103</div>
<div class="t" style="left:529.70px;top:370.33px;font-size:11.5px;color:#2B0A05;transform:scaleX(0.9863);">Disha Chauhan</div>
<div class="t" style="left:686.30px;top:370.33px;font-size:11.5px;color:#111;transform:scaleX(0.9220);">Platform As A Service(Paas)</div>
<div class="t" style="left:843.60px;top:370.33px;font-size:11.5px;color:#111;transform:scaleX(0.9971);">New Delhi</div>
<div class="t" style="left:1001.50px;top:370.33px;font-size:11.5px;color:#111;transform:scaleX(1.0625);">A</div>
<div class="t" style="left:1061.50px;top:370.33px;font-size:11.5px;color:#111;transform:scaleX(1.0625);">A</div>
<div class="t" style="left:1121.50px;top:370.33px;font-size:11.5px;color:#111;transform:scaleX(1.0625);">A</div>
<div class="t" style="left:1181.50px;top:370.33px;font-size:11.5px;color:#111;transform:scaleX(0.9918);">WH</div>
<div class="t" style="left:1241.50px;top:370.33px;font-size:11.5px;color:#111;transform:scaleX(0.9918);">WH</div>
<div class="t" style="left:1301.50px;top:370.33px;font-size:11.5px;color:#111;transform:scaleX(0.8494);">H_</div>
<div class="a" style="left:361px;top:385px;width:40px;height:22px;background:#ADD8E6;border-top:1px solid #fff;border-left:1px solid #fff;"></div>
<div class="a" style="left:362px;top:406px;width:37px;height:1px;background:#8C9498;"></div>
<div class="a" style="left:996px;top:385px;width:61px;height:22px;background:#D3D3D3;"></div>
<div class="a" style="left:1056px;top:385px;width:61px;height:22px;background:#D3D3D3;"></div>
<div class="a" style="left:1116px;top:385px;width:61px;height:22px;background:#D3D3D3;"></div>
<div class="a" style="left:1176px;top:385px;width:61px;height:22px;background:#D3D3D3;"></div>
<div class="a" style="left:1236px;top:385px;width:61px;height:22px;background:#D3D3D3;"></div>
<div class="a" style="left:1296px;top:385px;width:61px;height:22px;background:#fff;"></div>
<div class="t" style="left:403.70px;top:392.33px;font-size:11.5px;color:#2B0A05;transform:scaleX(0.9727);">Web2101</div>
<div class="t" style="left:529.70px;top:392.33px;font-size:11.5px;color:#2B0A05;transform:scaleX(0.9597);">Jitendra Kumar</div>
<div class="t" style="left:686.30px;top:392.33px;font-size:11.5px;color:#111;transform:scaleX(0.8810);">SOFTWARE DEVELOPMENT</div>
<div class="t" style="left:843.60px;top:392.33px;font-size:11.5px;color:#111;transform:scaleX(0.9971);">New Delhi</div>
<div class="t" style="left:1001.50px;top:392.33px;font-size:11.5px;color:#111;transform:scaleX(0.9375);">R</div>
<div class="t" style="left:1061.50px;top:392.33px;font-size:11.5px;color:#111;transform:scaleX(0.9375);">R</div>
<div class="t" style="left:1121.50px;top:392.33px;font-size:11.5px;color:#111;transform:scaleX(0.9375);">R</div>
<div class="t" style="left:1181.50px;top:392.33px;font-size:11.5px;color:#111;transform:scaleX(0.9375);">R</div>
<div class="t" style="left:1241.50px;top:392.33px;font-size:11.5px;color:#111;transform:scaleX(0.9375);">R</div>
<div class="t" style="left:1301.50px;top:392.33px;font-size:11.5px;color:#111;transform:scaleX(0.9000);">P</div>
<div class="a" style="left:361px;top:407px;width:40px;height:22px;background:#ADD8E6;border-top:1px solid #fff;border-left:1px solid #fff;"></div>
<div class="a" style="left:362px;top:428px;width:37px;height:1px;background:#8C9498;"></div>
<div class="a" style="left:996px;top:407px;width:61px;height:22px;background:#fff;"></div>
<div class="a" style="left:1056px;top:407px;width:61px;height:22px;background:#fff;"></div>
<div class="a" style="left:1116px;top:407px;width:61px;height:22px;background:#fff;"></div>
<div class="a" style="left:1176px;top:407px;width:61px;height:22px;background:#E0FFFF;"></div>
<div class="a" style="left:1236px;top:407px;width:61px;height:22px;background:#E0FFFF;"></div>
<div class="a" style="left:1296px;top:407px;width:61px;height:22px;background:#fff;"></div>
<div class="t" style="left:403.70px;top:414.33px;font-size:11.5px;color:#2B0A05;transform:scaleX(0.9531);">Web2104</div>
<div class="t" style="left:529.70px;top:414.33px;font-size:11.5px;color:#2B0A05;transform:scaleX(0.9468);">Sayan Ghosh</div>
<div class="t" style="left:686.30px;top:414.33px;font-size:11.5px;color:#111;transform:scaleX(0.9220);">Platform As A Service(Paas)</div>
<div class="t" style="left:843.60px;top:414.33px;font-size:11.5px;color:#111;transform:scaleX(0.9971);">New Delhi</div>
<div class="t" style="left:1001.50px;top:414.33px;font-size:11.5px;color:#111;transform:scaleX(1.0625);">A</div>
<div class="t" style="left:1061.50px;top:414.33px;font-size:11.5px;color:#111;transform:scaleX(1.0625);">A</div>
<div class="t" style="left:1121.50px;top:414.33px;font-size:11.5px;color:#111;transform:scaleX(1.0625);">A</div>
<div class="t" style="left:1181.50px;top:414.33px;font-size:11.5px;color:#111;transform:scaleX(0.9918);">WH</div>
<div class="t" style="left:1241.50px;top:414.33px;font-size:11.5px;color:#111;transform:scaleX(0.9918);">WH</div>
<div class="t" style="left:1301.50px;top:414.33px;font-size:11.5px;color:#111;transform:scaleX(0.8494);">H_</div>
<div class="a" style="left:361px;top:429px;width:40px;height:22px;background:#ADD8E6;border-top:1px solid #fff;border-left:1px solid #fff;"></div>
<div class="a" style="left:362px;top:450px;width:37px;height:1px;background:#8C9498;"></div>
<div class="a" style="left:996px;top:429px;width:61px;height:22px;background:#fff;"></div>
<div class="a" style="left:1056px;top:429px;width:61px;height:22px;background:#fff;"></div>
<div class="a" style="left:1116px;top:429px;width:61px;height:22px;background:#fff;"></div>
<div class="a" style="left:1176px;top:429px;width:61px;height:22px;background:#E0FFFF;"></div>
<div class="a" style="left:1236px;top:429px;width:61px;height:22px;background:#E0FFFF;"></div>
<div class="a" style="left:1296px;top:429px;width:61px;height:22px;background:#fff;"></div>
<div class="t" style="left:403.70px;top:436.33px;font-size:11.5px;color:#2B0A05;transform:scaleX(0.9727);">Web2102</div>
<div class="t" style="left:529.70px;top:436.33px;font-size:11.5px;color:#2B0A05;transform:scaleX(0.9959);">Sudhanshu Mishra</div>
<div class="t" style="left:686.30px;top:436.33px;font-size:11.5px;color:#111;transform:scaleX(0.9220);">Platform As A Service(Paas)</div>
<div class="t" style="left:843.60px;top:436.33px;font-size:11.5px;color:#111;transform:scaleX(0.9971);">New Delhi</div>
<div class="t" style="left:1001.50px;top:436.33px;font-size:11.5px;color:#111;transform:scaleX(1.0625);">A</div>
<div class="t" style="left:1061.50px;top:436.33px;font-size:11.5px;color:#111;transform:scaleX(1.0625);">A</div>
<div class="t" style="left:1121.50px;top:436.33px;font-size:11.5px;color:#111;transform:scaleX(1.0625);">A</div>
<div class="t" style="left:1181.50px;top:436.33px;font-size:11.5px;color:#111;transform:scaleX(0.9918);">WH</div>
<div class="t" style="left:1241.50px;top:436.33px;font-size:11.5px;color:#111;transform:scaleX(0.9918);">WH</div>
<div class="t" style="left:1301.50px;top:436.33px;font-size:11.5px;color:#111;transform:scaleX(0.8494);">H_</div>
<div class="a" style="left:361px;top:451px;width:40px;height:22px;background:#ADD8E6;border-top:1px solid #fff;border-left:1px solid #fff;"></div>
<div class="a" style="left:362px;top:472px;width:37px;height:1px;background:#8C9498;"></div>
<div class="a" style="left:996px;top:451px;width:61px;height:22px;background:#fff;"></div>
<div class="a" style="left:1056px;top:451px;width:61px;height:22px;background:#fff;"></div>
<div class="a" style="left:1116px;top:451px;width:61px;height:22px;background:#fff;"></div>
<div class="a" style="left:1176px;top:451px;width:61px;height:22px;background:#fff;"></div>
<div class="a" style="left:1236px;top:451px;width:61px;height:22px;background:#fff;"></div>
<div class="a" style="left:1296px;top:451px;width:61px;height:22px;background:#fff;"></div>
<div class="t" style="left:403.70px;top:458.33px;font-size:11.5px;color:#2B0A05;transform:scaleX(0.9727);">Web2108</div>
<div class="t" style="left:529.70px;top:458.33px;font-size:11.5px;color:#2B0A05;transform:scaleX(0.9874);">Virender Bhasin</div>
<div class="t" style="left:686.30px;top:458.33px;font-size:11.5px;color:#111;transform:scaleX(0.9102);">MANAGEMENT</div>
<div class="t" style="left:843.60px;top:458.33px;font-size:11.5px;color:#111;transform:scaleX(0.9971);">New Delhi</div>
<div class="t" style="left:1001.50px;top:458.33px;font-size:11.5px;color:#111;transform:scaleX(1.0625);">A</div>
<div class="t" style="left:1061.50px;top:458.33px;font-size:11.5px;color:#111;transform:scaleX(1.0625);">A</div>
<div class="t" style="left:1121.50px;top:458.33px;font-size:11.5px;color:#111;transform:scaleX(1.0625);">A</div>
<div class="t" style="left:1181.50px;top:458.33px;font-size:11.5px;color:#111;transform:scaleX(1.0625);">A</div>
<div class="t" style="left:1241.50px;top:458.33px;font-size:11.5px;color:#111;transform:scaleX(1.0625);">A</div>
<div class="t" style="left:1301.50px;top:458.33px;font-size:11.5px;color:#111;transform:scaleX(1.0625);">A</div>
<div class="a" style="left:361px;top:473px;width:40px;height:22px;background:#ADD8E6;border-top:1px solid #fff;border-left:1px solid #fff;"></div>
<div class="a" style="left:362px;top:494px;width:37px;height:1px;background:#8C9498;"></div>
<div class="a" style="left:996px;top:473px;width:61px;height:22px;background:#D3D3D3;"></div>
<div class="a" style="left:1056px;top:473px;width:61px;height:22px;background:#D3D3D3;"></div>
<div class="a" style="left:1116px;top:473px;width:61px;height:22px;background:#D3D3D3;"></div>
<div class="a" style="left:1176px;top:473px;width:61px;height:22px;background:#D3D3D3;"></div>
<div class="a" style="left:1236px;top:473px;width:61px;height:22px;background:#D3D3D3;"></div>
<div class="a" style="left:1296px;top:473px;width:61px;height:22px;background:#D3D3D3;"></div>
<div class="t" style="left:403.70px;top:480.33px;font-size:11.5px;color:#2B0A05;transform:scaleX(0.9727);">Web2107</div>
<div class="t" style="left:529.70px;top:480.33px;font-size:11.5px;color:#2B0A05;transform:scaleX(0.9067);">Yash Pawar</div>
<div class="t" style="left:686.30px;top:480.33px;font-size:11.5px;color:#111;transform:scaleX(0.8517);">PAYROLL DEPARTMENT</div>
<div class="t" style="left:843.60px;top:480.33px;font-size:11.5px;color:#111;transform:scaleX(0.9971);">New Delhi</div>
<div class="t" style="left:1001.50px;top:480.33px;font-size:11.5px;color:#111;transform:scaleX(0.9375);">R</div>
<div class="t" style="left:1061.50px;top:480.33px;font-size:11.5px;color:#111;transform:scaleX(0.9375);">R</div>
<div class="t" style="left:1121.50px;top:480.33px;font-size:11.5px;color:#111;transform:scaleX(0.9375);">R</div>
<div class="t" style="left:1181.50px;top:480.33px;font-size:11.5px;color:#111;transform:scaleX(0.9375);">R</div>
<div class="t" style="left:1241.50px;top:480.33px;font-size:11.5px;color:#111;transform:scaleX(0.9375);">R</div>
<div class="t" style="left:1301.50px;top:480.33px;font-size:11.5px;color:#111;transform:scaleX(0.9375);">R</div>
<div class="a" style="left:361px;top:495px;width:40px;height:22px;background:#ADD8E6;border-top:1px solid #fff;border-left:1px solid #fff;"></div>
<div class="a" style="left:362px;top:516px;width:37px;height:1px;background:#8C9498;"></div>
<div class="a" style="left:996px;top:495px;width:61px;height:22px;background:#D3D3D3;"></div>
<div class="a" style="left:1056px;top:495px;width:61px;height:22px;background:#D3D3D3;"></div>
<div class="a" style="left:1116px;top:495px;width:61px;height:22px;background:#D3D3D3;"></div>
<div class="a" style="left:1176px;top:495px;width:61px;height:22px;background:#D3D3D3;"></div>
<div class="a" style="left:1236px;top:495px;width:61px;height:22px;background:#D3D3D3;"></div>
<div class="a" style="left:1296px;top:495px;width:61px;height:22px;background:#D3D3D3;"></div>
<div class="t" style="left:403.70px;top:502.33px;font-size:11.5px;color:#2B0A05;transform:scaleX(0.9727);">Web2109</div>
<div class="t" style="left:529.70px;top:502.33px;font-size:11.5px;color:#2B0A05;transform:scaleX(0.9955);">Prabhangshu Deb</div>
<div class="t" style="left:686.30px;top:502.33px;font-size:11.5px;color:#111;transform:scaleX(1.0062);">Sales &amp; Marketing</div>
<div class="t" style="left:843.60px;top:502.33px;font-size:11.5px;color:#111;transform:scaleX(0.9971);">New Delhi</div>
<div class="t" style="left:1001.50px;top:502.33px;font-size:11.5px;color:#111;transform:scaleX(0.9375);">R</div>
<div class="t" style="left:1061.50px;top:502.33px;font-size:11.5px;color:#111;transform:scaleX(0.9375);">R</div>
<div class="t" style="left:1121.50px;top:502.33px;font-size:11.5px;color:#111;transform:scaleX(0.9375);">R</div>
<div class="t" style="left:1181.50px;top:502.33px;font-size:11.5px;color:#111;transform:scaleX(0.9375);">R</div>
<div class="t" style="left:1241.50px;top:502.33px;font-size:11.5px;color:#111;transform:scaleX(0.9375);">R</div>
<div class="t" style="left:1301.50px;top:502.33px;font-size:11.5px;color:#111;transform:scaleX(0.9375);">R</div>
<div class="a" style="left:361px;top:517px;width:40px;height:22px;background:#ADD8E6;border-top:1px solid #fff;border-left:1px solid #fff;"></div>
<div class="a" style="left:996px;top:517px;width:61px;height:22px;background:#D3D3D3;"></div>
<div class="a" style="left:1056px;top:517px;width:61px;height:22px;background:#D3D3D3;"></div>
<div class="a" style="left:1116px;top:517px;width:61px;height:22px;background:#D3D3D3;"></div>
<div class="a" style="left:1176px;top:517px;width:61px;height:22px;background:#D3D3D3;"></div>
<div class="a" style="left:1236px;top:517px;width:61px;height:22px;background:#D3D3D3;"></div>
<div class="a" style="left:1296px;top:517px;width:61px;height:22px;background:#D3D3D3;"></div>
<div class="a" style="left:401px;top:517px;width:124px;height:22px;background:#0078D7;"></div>
<div class="t" style="left:403.70px;top:524.33px;font-size:11.5px;color:#fff;transform:scaleX(0.9901);">Web2110</div>
<div class="t" style="left:529.70px;top:524.33px;font-size:11.5px;color:#2B0A05;transform:scaleX(0.9640);">Priyanka Dubey</div>
<div class="t" style="left:686.30px;top:524.33px;font-size:11.5px;color:#111;transform:scaleX(0.8503);">XBRL DEPARTMENT</div>
<div class="t" style="left:843.60px;top:524.33px;font-size:11.5px;color:#111;transform:scaleX(0.9971);">New Delhi</div>
<div class="t" style="left:1001.50px;top:524.33px;font-size:11.5px;color:#111;transform:scaleX(0.9375);">R</div>
<div class="t" style="left:1061.50px;top:524.33px;font-size:11.5px;color:#111;transform:scaleX(0.9375);">R</div>
<div class="t" style="left:1121.50px;top:524.33px;font-size:11.5px;color:#111;transform:scaleX(0.9375);">R</div>
<div class="t" style="left:1181.50px;top:524.33px;font-size:11.5px;color:#111;transform:scaleX(0.9375);">R</div>
<div class="t" style="left:1241.50px;top:524.33px;font-size:11.5px;color:#111;transform:scaleX(0.9375);">R</div>
<div class="t" style="left:1301.50px;top:524.33px;font-size:11.5px;color:#111;transform:scaleX(0.9375);">R</div>
<div class="a" style="left:400px;top:209px;width:1px;height:330px;background:#A0A0A0;"></div>
<div class="a" style="left:525px;top:209px;width:1px;height:330px;background:#A0A0A0;"></div>
<div class="a" style="left:682px;top:209px;width:1px;height:330px;background:#A0A0A0;"></div>
<div class="a" style="left:839px;top:209px;width:1px;height:330px;background:#A0A0A0;"></div>
<div class="a" style="left:996px;top:209px;width:1px;height:330px;background:#A0A0A0;"></div>
<div class="a" style="left:1056px;top:209px;width:1px;height:330px;background:#A0A0A0;"></div>
<div class="a" style="left:1116px;top:209px;width:1px;height:330px;background:#A0A0A0;"></div>
<div class="a" style="left:1176px;top:209px;width:1px;height:330px;background:#A0A0A0;"></div>
<div class="a" style="left:1236px;top:209px;width:1px;height:330px;background:#A0A0A0;"></div>
<div class="a" style="left:1296px;top:209px;width:1px;height:330px;background:#A0A0A0;"></div>
<div class="a" style="left:525px;top:231px;width:1px;height:308px;background:#C99A78;"></div>
<div class="a" style="left:682px;top:231px;width:1px;height:308px;background:#A0A0A0;"></div>
<div class="t" style="left:406.40px;top:214.72px;font-size:11.5px;color:#111;transform:scaleX(0.9669);">Code</div>
<div class="t" style="left:531.40px;top:214.72px;font-size:11.5px;color:#111;transform:scaleX(0.9313);">Name</div>
<div class="t" style="left:688.40px;top:214.72px;font-size:11.5px;color:#111;transform:scaleX(0.9936);">Department</div>
<div class="t" style="left:845.40px;top:214.72px;font-size:11.5px;color:#111;transform:scaleX(1.0097);">Location</div>
<div class="t" style="left:1001.50px;top:214.72px;font-size:11.5px;color:#111;transform:scaleX(0.9936);">01/05</div>
<div class="t" style="left:1061.50px;top:214.72px;font-size:11.5px;color:#111;transform:scaleX(0.9936);">02/05</div>
<div class="t" style="left:1121.50px;top:214.72px;font-size:11.5px;color:#111;transform:scaleX(0.9936);">03/05</div>
<div class="t" style="left:1181.50px;top:214.72px;font-size:11.5px;color:#111;transform:scaleX(0.9936);">04/05</div>
<div class="t" style="left:1241.50px;top:214.72px;font-size:11.5px;color:#111;transform:scaleX(0.9936);">05/05</div>
<div class="t" style="left:1301.50px;top:214.72px;font-size:11.5px;color:#111;transform:scaleX(0.9936);">06/05</div>
</div>
<svg style="left:366px;top:522px" width="8" height="12"><path d="M1 1 L7 6 L1 11 Z" fill="#333" stroke="#fff" stroke-width="0.6"/></svg>
<div class="a" style="left:1312px;top:208px;width:17px;height:333px;background:repeating-conic-gradient(#F4F4F4 0 25%, #FFFFFF 0 50%) 0 0/2px 2px;"></div>
<div class="a" style="left:1312px;top:208px;width:17px;height:17px;background:#F0F0F0;border-right:1px solid #696969;border-bottom:1px solid #696969;box-shadow:inset 1px 1px 0 #fff;"></div>
<svg style="left:1316px;top:213px" width="9" height="5"><path d="M0.5 4.5 L4.5 0.5 L8.5 4.5 Z" fill="#000"/></svg>
<div class="a" style="left:1312px;top:514px;width:17px;height:10px;background:#F0F0F0;border-right:1px solid #696969;border-bottom:1px solid #696969;box-shadow:inset 1px 1px 0 #fff;"></div>
<div class="a" style="left:1312px;top:524px;width:17px;height:17px;background:#F0F0F0;border-right:1px solid #696969;border-bottom:1px solid #696969;box-shadow:inset 1px 1px 0 #fff;"></div>
<svg style="left:1316px;top:531px" width="9" height="5"><path d="M0.5 0.5 L4.5 4.5 L8.5 0.5 Z" fill="#000"/></svg>
<div class="a" style="left:361px;top:541px;width:951px;height:17px;background:repeating-conic-gradient(#F4F4F4 0 25%, #FFFFFF 0 50%) 0 0/2px 2px;"></div>
<div class="a" style="left:361px;top:541px;width:16px;height:17px;background:#F0F0F0;border-right:1px solid #696969;border-bottom:1px solid #696969;box-shadow:inset 1px 1px 0 #fff;"></div>
<svg style="left:366px;top:545px" width="5" height="9"><path d="M4.5 0 L0.5 4.5 L4.5 9 Z" fill="#000"/></svg>
<div class="a" style="left:377px;top:541px;width:265px;height:17px;background:#F0F0F0;border-right:1px solid #696969;border-bottom:1px solid #696969;box-shadow:inset 1px 1px 0 #fff;"></div>
<div class="a" style="left:1296px;top:541px;width:16px;height:17px;background:#F0F0F0;border-right:1px solid #696969;border-bottom:1px solid #696969;box-shadow:inset 1px 1px 0 #fff;"></div>
<svg style="left:1302px;top:545px" width="5" height="9"><path d="M0.5 0 L4.5 4.5 L0.5 9 Z" fill="#000"/></svg>
<div class="a" style="left:1312px;top:541px;width:17px;height:17px;background:#F0F0F0;"></div>
<div class="t" style="left:357.70px;top:569.23px;font-size:11.5px;color:#111;transform:scaleX(0.9017);">Search</div>
<div class="a" style="left:509px;top:569px;width:12px;height:12px;border-radius:50%;background:#fff;border:1px solid;border-color:#7A7A7A #F4F4F4 #F4F4F4 #7A7A7A;box-shadow:inset 1px 1px 0 #404040;"></div>
<div class="a" style="left:513px;top:573px;width:4px;height:4px;border-radius:50%;background:#000;"></div>
<div class="t" style="left:527.00px;top:570.23px;font-size:11.5px;color:#111;transform:scaleX(0.9412);">Name</div>
<div class="a" style="left:591px;top:569px;width:12px;height:12px;border-radius:50%;background:#fff;border:1px solid;border-color:#7A7A7A #F4F4F4 #F4F4F4 #7A7A7A;box-shadow:inset 1px 1px 0 #404040;"></div>
<div class="t" style="left:608.20px;top:570.23px;font-size:11.5px;color:#111;transform:scaleX(0.9743);">Code</div>
<div class="a" style="left:674px;top:563px;width:150px;height:21px;background:#fff;border:1px solid #9A9A9A;"></div>
<div class="t" style="left:891.20px;top:571.02px;font-size:11.5px;color:#A8553F;transform:scaleX(0.9938);">Employee not mapped with attendance device</div>
<div class="a" style="left:522px;top:590px;width:194px;height:25px;border-bottom:1px solid #fff;"></div>
<div class="a" style="left:522px;top:590px;width:194px;height:24px;background:#E1E1E1;border:1px solid #A0A0A0;box-shadow:inset 1px 1px 0 #fff;"></div>
<div class="t" style="left:584.40px;top:596.42px;font-size:11.5px;color:#111;transform:scaleX(1.0091);">Template for WH</div>
<div class="a" style="left:728px;top:590px;width:189px;height:25px;border-bottom:1px solid #fff;"></div>
<div class="a" style="left:728px;top:590px;width:189px;height:24px;background:#E1E1E1;border:1px solid #A0A0A0;box-shadow:inset 1px 1px 0 #fff;"></div>
<div class="t" style="left:787.20px;top:596.42px;font-size:11.5px;color:#111;transform:scaleX(1.0034);"><u>I</u>mport WH List</div>
<div class="a" style="left:929px;top:590px;width:188px;height:25px;border-bottom:1px solid #fff;"></div>
<div class="a" style="left:929px;top:590px;width:188px;height:24px;background:#E1E1E1;border:1px solid #A0A0A0;box-shadow:inset 1px 1px 0 #fff;"></div>
<div class="t" style="left:990.00px;top:596.42px;font-size:11.5px;color:#111;transform:scaleX(0.9768);"><u>E</u>xport to Excel</div>
<div class="a" style="left:1119px;top:591px;width:213px;height:25px;border-bottom:1px solid #fff;"></div>
<div class="a" style="left:1119px;top:591px;width:213px;height:24px;background:#E1E1E1;border:1px solid #A0A0A0;box-shadow:inset 1px 1px 0 #fff;"></div>
<div class="t" style="left:1183.50px;top:597.42px;font-size:11.5px;color:#111;transform:scaleX(0.9438);">Manual Changes</div>
<div class="a" style="left:899px;top:621px;width:117px;height:25px;border-bottom:1px solid #fff;"></div>
<div class="a" style="left:899px;top:621px;width:117px;height:24px;background:#E1E1E1;border:1px solid #A0A0A0;box-shadow:inset 1px 1px 0 #fff;"></div>
<div class="t" style="left:945.00px;top:627.42px;font-size:11.5px;color:#111;transform:scaleX(0.8909);"><u>S</u>ave</div>
<div class="a" style="left:1026px;top:622px;width:180px;height:25px;border-bottom:1px solid #fff;"></div>
<div class="a" style="left:1026px;top:622px;width:180px;height:24px;background:#E1E1E1;border:1px solid #A0A0A0;box-shadow:inset 1px 1px 0 #fff;"></div>
<div class="t" style="left:1076.30px;top:628.42px;font-size:11.5px;color:#111;transform:scaleX(1.0074);"><u>P</u>ost to Monthly</div>
<div class="a" style="left:1216px;top:622px;width:117px;height:25px;border-bottom:1px solid #fff;"></div>
<div class="a" style="left:1216px;top:622px;width:117px;height:24px;background:#E1E1E1;border:1px solid #A0A0A0;box-shadow:inset 1px 1px 0 #fff;"></div>
<div class="t" style="left:1260.30px;top:628.42px;font-size:11.5px;color:#111;transform:scaleX(0.9446);"><u>C</u>lose</div>
<svg style="left:1029px;top:626px" width="17" height="17"><defs><linearGradient id="ag1029626" x1="0" y1="0" x2="0" y2="1"><stop offset="0" stop-color="#7FA8F0"/><stop offset="1" stop-color="#2A56C0"/></linearGradient></defs>
    <path d="M4 2 H10 V0 L16 4.2 L10 8.4 V6.5 H4 Z" fill="url(#ag1029626)" stroke="#2C4C9A" stroke-width="0.6"/>
    <path d="M12 10 H6 V8 L0 12 L6 16 V14 H12 Z" fill="url(#ag1029626)" stroke="#2C4C9A" stroke-width="0.6"/></svg>
<svg style="left:16px;top:66px" width="32" height="22"><defs><linearGradient id="dmg" x1="0" y1="0" x2="0" y2="1"><stop offset="0" stop-color="#8A8EF2"/><stop offset="1" stop-color="#D05AF0"/></linearGradient>
<pattern id="dots" width="3" height="3" patternUnits="userSpaceOnUse"><rect width="3" height="3" fill="#C070F0"/><circle cx="1.5" cy="1.5" r="0.9" fill="#F4E8FF"/></pattern></defs>
<rect x="1" y="1.5" width="23" height="19" rx="1.5" fill="#F6F2FE" stroke="url(#dmg)" stroke-width="1.6"/>
<rect x="1" y="1" width="23" height="4.5" fill="#8A90F0"/>
<circle cx="11.5" cy="11.5" r="3.4" fill="none" stroke="#9A70E8" stroke-width="1.4"/>
<rect x="14.5" y="10" width="15" height="10.5" rx="2" fill="url(#dots)"/>
</svg>
<svg style="left:102px;top:64px" width="19" height="26"><rect x="0" y="0" width="19" height="26" rx="2.5" fill="#3C9BF0"/>
<rect x="4.5" y="3.8" width="10" height="10" fill="#DDEBFA"/>
<path d="M6 13.8 Q6 10.3 9.5 10 Q13 10.3 13 13.8 Z" fill="#B0400F"/>
<circle cx="9.5" cy="7.8" r="2.3" fill="#F2A93A"/><path d="M7.2 7.2 Q9.5 4.2 11.8 7.2 Q9.5 6 7.2 7.2Z" fill="#5A2A10"/>
<rect x="4.5" y="16" width="10" height="1.4" fill="#DDEBFA"/><rect x="4.5" y="18.8" width="10" height="1.4" fill="#DDEBFA"/><rect x="4.5" y="21.5" width="6" height="1.4" fill="#DDEBFA"/>
</svg>
<svg style="left:197px;top:64px" width="32" height="26"><defs><linearGradient id="fpg" x1="0" y1="0" x2="0" y2="1"><stop offset="0" stop-color="#6A78E6"/><stop offset="1" stop-color="#CC5AE8"/></linearGradient></defs>
<path d="M6.5 8 A10.5 10.5 0 0 1 26.2 11" fill="none" stroke="url(#fpg)" stroke-width="1.7"/>
<path d="M24.8 18.5 A10.5 10.5 0 0 1 5.6 15" fill="none" stroke="url(#fpg)" stroke-width="1.7"/>
<path d="M2 13 L5 7.8 L8 13 Z" fill="#F2EEFC" stroke="#7A6AE6" stroke-width="1.2"/>
<path d="M24 12.5 L30 12.5 L27 18 Z" fill="#F2EEFC" stroke="#8A6AE6" stroke-width="1.2"/>
<circle cx="16" cy="13" r="3.4" fill="#C0BCF6" stroke="#7A6AE0" stroke-width="1.5"/>
</svg>
<svg style="left:276px;top:70px" width="17" height="16"><rect x="1.5" y="0.5" width="14.5" height="14" fill="#E8F2FC" stroke="#C4DAF0"/><rect x="1.5" y="0.5" width="14.5" height="2.2" fill="#C8DEF4"/>
<circle cx="5.4" cy="5.4" r="4.5" fill="#F4F9FE" stroke="#6C9CD8" stroke-width="1.4"/><path d="M5.4 2.6 V5.4 L3.6 4" fill="none" stroke="#4A6A9A" stroke-width="0.9"/></svg>
<svg style="left:278px;top:102px" width="12" height="14"><rect x="0.6" y="0.6" width="10.8" height="12.8" rx="2" fill="#D4D2FA" stroke="#8C86DA" stroke-width="1"/>
<rect x="2" y="2" width="8" height="1.4" fill="#F4F4FF"/><rect x="2" y="4.2" width="8" height="1.2" fill="#8C8CE8"/><rect x="2" y="6.4" width="8" height="1.2" fill="#8C8CE8"/><rect x="2" y="8.6" width="8" height="1.2" fill="#8C8CE8"/>
<rect x="2" y="10.5" width="5" height="1.8" fill="#F0C8F4"/><path d="M8.5 13.4 L11.4 10.5 L11.4 13.4 Z" fill="#8C70D8"/></svg>
<svg style="left:423px;top:102px" width="12" height="14"><rect x="0.6" y="0.6" width="10.8" height="12.8" rx="2" fill="#D4D2FA" stroke="#8C86DA" stroke-width="1"/>
<rect x="2" y="2" width="8" height="1.4" fill="#F4F4FF"/><rect x="2" y="4.2" width="8" height="1.2" fill="#8C8CE8"/><rect x="2" y="6.4" width="8" height="1.2" fill="#8C8CE8"/><rect x="2" y="8.6" width="8" height="1.2" fill="#8C8CE8"/>
<rect x="2" y="10.5" width="5" height="1.8" fill="#F0C8F4"/><path d="M8.5 13.4 L11.4 10.5 L11.4 13.4 Z" fill="#8C70D8"/></svg>
<svg style="left:420px;top:69px" width="17" height="17"><circle cx="8.5" cy="8.5" r="7.4" fill="#EEF5FD" stroke="#9CC0EA" stroke-width="1.6"/><path d="M8.5 4 V8.5 L6.5 10.5" fill="none" stroke="#4A6A9A" stroke-width="1"/></svg>
<svg style="left:597px;top:62px" width="30" height="30"><rect x="0.7" y="0.7" width="28.6" height="28.6" rx="1" fill="#fff" stroke="#9BBEE4" stroke-width="1.4"/>
<rect x="0.7" y="0.7" width="28.6" height="5" fill="#AFD0F2"/><rect x="0.7" y="26.5" width="28.6" height="2.8" fill="#C4DEF6"/>
<path d="M8 16 L12.3 20.3 L23.4 10.3" fill="none" stroke="#4A78AE" stroke-width="1.8"/></svg>
<svg style="left:693px;top:61px" width="32" height="32"><circle cx="15.5" cy="16" r="14.5" fill="#F6FAFE" stroke="#90B8E6" stroke-width="1.2"/><circle cx="15.5" cy="16" r="12.2" fill="none" stroke="#90B8E6" stroke-width="0.9"/>
<path d="M10.5 14.5 L15.8 19 L29.5 5.5" fill="none" stroke="#6E9CD6" stroke-width="4"/><path d="M10.5 14.5 L15.8 19 L29.5 5.5" fill="none" stroke="#B4D4F4" stroke-width="2.2"/></svg>
<svg style="left:795px;top:64px" width="26" height="25"><rect x="10" y="3.5" width="15" height="18.5" fill="#3C9A40"/>
<rect x="15" y="6" width="8" height="1.6" fill="#E8F4E8"/><rect x="15" y="9" width="8" height="1.6" fill="#E8F4E8"/><rect x="15" y="12" width="8" height="1.6" fill="#E8F4E8"/><rect x="15" y="15" width="8" height="1.6" fill="#E8F4E8"/><rect x="15" y="18" width="8" height="1.6" fill="#E8F4E8"/>
<rect x="12.5" y="6" width="1.6" height="13.6" fill="#E8F4E8"/>
<path d="M0.5 3 L14 0.5 V24.5 L0.5 22 Z" fill="#1E7232"/>
<path d="M3.5 7.5 L5.8 7.5 L7.3 10.3 L8.8 7.5 L11 7.5 L8.6 12 L11.2 16.8 L8.9 16.8 L7.3 13.8 L5.7 16.8 L3.4 16.8 L6 12 Z" fill="#fff"/></svg>
<svg style="left:876px;top:68px" width="17" height="18"><path d="M1.5 0.5 H11 L15.5 5 V17.5 H1.5 Z" fill="#fff" stroke="#C8C8C8" stroke-width="1"/><path d="M11 0.5 V5 H15.5" fill="#EAEAEA" stroke="#C8C8C8" stroke-width="1"/>
<rect x="0" y="8" width="17" height="7" fill="#2C7DD0"/><text x="8.5" y="14" font-family="Liberation Sans" font-size="6.5" font-weight="bold" fill="#fff" text-anchor="middle">TXT</text></svg>
<svg style="left:942px;top:61px" width="32" height="32"><circle cx="16" cy="16" r="15" fill="#80ACE8" stroke="#6A96D6" stroke-width="1"/><path d="M9 16.5 L14 21 L24.5 10.5" fill="none" stroke="#fff" stroke-width="3"/></svg>
<svg style="left:1017px;top:64px" width="26" height="25"><rect x="1" y="1" width="24" height="23.5" rx="1.5" fill="#C6DFF8"/><rect x="1" y="0.5" width="24" height="3.2" fill="#3354B4"/>
<rect x="5" y="7" width="16" height="2.8" fill="#2F70D2"/>
<rect x="4" y="13.5" width="1.2" height="1.2" fill="#2A4AA0"/><rect x="6.5" y="13.5" width="14.5" height="1.2" fill="#2A4AA0"/>
<rect x="4" y="16.3" width="1.2" height="1.2" fill="#2A4AA0"/><rect x="6.5" y="16.3" width="14.5" height="1.2" fill="#2A4AA0"/>
<rect x="4" y="19" width="1.2" height="1.2" fill="#2A4AA0"/><rect x="6.5" y="19" width="14.5" height="1.2" fill="#2A4AA0"/></svg>
<svg style="left:1084px;top:65px" width="28" height="24"><rect x="0.5" y="0.5" width="26.5" height="22.5" rx="1" fill="#C4DEF8"/><rect x="3.5" y="3.5" width="20.5" height="3.2" fill="#3354B4"/>
<rect x="3.5" y="10" width="9" height="10.5" fill="#2290F0"/><rect x="14.5" y="10" width="9.5" height="10.5" fill="#2290F0"/></svg>
<svg style="left:1153px;top:64px" width="26" height="26"><rect x="0" y="0" width="26" height="25.5" rx="3" fill="#3A4AB8"/>
<g transform="translate(13 13)" fill="#A8D2F8"><circle r="5.6"/><rect x="-1.8" y="-8.2" width="3.6" height="3.4" transform="rotate(0)"/><rect x="-1.8" y="-8.2" width="3.6" height="3.4" transform="rotate(60)"/><rect x="-1.8" y="-8.2" width="3.6" height="3.4" transform="rotate(120)"/><rect x="-1.8" y="-8.2" width="3.6" height="3.4" transform="rotate(180)"/><rect x="-1.8" y="-8.2" width="3.6" height="3.4" transform="rotate(240)"/><rect x="-1.8" y="-8.2" width="3.6" height="3.4" transform="rotate(300)"/><circle r="2.4" fill="#3A4AB8"/></g></svg>
<svg style="left:524px;top:594px" width="17" height="17"><defs><linearGradient id="xd524" x1="0" y1="0" x2="1" y2="1"><stop offset="0" stop-color="#F4FAFF"/><stop offset="1" stop-color="#A8C8EC"/></linearGradient></defs>
<path d="M2.5 0.5 H11 L15.5 5 V15.5 H2.5 Z" fill="url(#xd524)" stroke="#2A3A8A" stroke-width="1"/><path d="M11 0.5 V5 H15.5" fill="#8AB0E0" stroke="#2A3A8A" stroke-width="0.8"/>
<rect x="0.5" y="4.5" width="9.5" height="9.5" fill="#2E7A2E" stroke="#1E5A1E" stroke-width="0.8"/>
<rect x="1.5" y="5.3" width="7.5" height="1.2" fill="#D8F0C8"/><rect x="1.5" y="12" width="7.5" height="1.2" fill="#D8F0C8"/>
<path d="M2.2 7 L8.2 11.8 M8.2 7 L6.6 8.4" stroke="#E8FFD8" stroke-width="1.3"/></svg>
<svg style="left:730px;top:593px" width="17" height="17"><defs><linearGradient id="xd730" x1="0" y1="0" x2="1" y2="1"><stop offset="0" stop-color="#F4FAFF"/><stop offset="1" stop-color="#A8C8EC"/></linearGradient></defs>
<path d="M2.5 0.5 H11 L15.5 5 V15.5 H2.5 Z" fill="url(#xd730)" stroke="#2A3A8A" stroke-width="1"/><path d="M11 0.5 V5 H15.5" fill="#8AB0E0" stroke="#2A3A8A" stroke-width="0.8"/>
<rect x="0.5" y="4.5" width="9.5" height="9.5" fill="#2E7A2E" stroke="#1E5A1E" stroke-width="0.8"/>
<rect x="1.5" y="5.3" width="7.5" height="1.2" fill="#D8F0C8"/><rect x="1.5" y="12" width="7.5" height="1.2" fill="#D8F0C8"/>
<path d="M2.2 7 L8.2 11.8 M8.2 7 L6.6 8.4" stroke="#E8FFD8" stroke-width="1.3"/></svg>
<svg style="left:931px;top:593px" width="17" height="17"><defs><linearGradient id="xd931" x1="0" y1="0" x2="1" y2="1"><stop offset="0" stop-color="#F4FAFF"/><stop offset="1" stop-color="#A8C8EC"/></linearGradient></defs>
<path d="M2.5 0.5 H11 L15.5 5 V15.5 H2.5 Z" fill="url(#xd931)" stroke="#2A3A8A" stroke-width="1"/><path d="M11 0.5 V5 H15.5" fill="#8AB0E0" stroke="#2A3A8A" stroke-width="0.8"/>
<rect x="0.5" y="4.5" width="9.5" height="9.5" fill="#2E7A2E" stroke="#1E5A1E" stroke-width="0.8"/>
<rect x="1.5" y="5.3" width="7.5" height="1.2" fill="#D8F0C8"/><rect x="1.5" y="12" width="7.5" height="1.2" fill="#D8F0C8"/>
<path d="M2.2 7 L8.2 11.8 M8.2 7 L6.6 8.4" stroke="#E8FFD8" stroke-width="1.3"/></svg>
<svg style="left:13px;top:596px" width="16" height="17"><rect x="0.5" y="1.5" width="12" height="15" fill="#fff" stroke="#707070" stroke-width="1"/>
<path d="M2.5 5 H6 M2.5 7.5 H5 M2.5 10 H5 M2.5 12.5 H9" stroke="#A88A80" stroke-width="1"/>
<path d="M4 13 Q6 8 10 7 L15 9 L14 14 Q9 14 4 13 Z" fill="#C8502A"/>
<path d="M6 11 L12.5 0.5" stroke="#222" stroke-width="1.6"/></svg>
<svg style="left:1121px;top:594px" width="16" height="17"><rect x="0.5" y="1.5" width="12" height="15" fill="#fff" stroke="#707070" stroke-width="1"/>
<path d="M2.5 5 H6 M2.5 7.5 H5 M2.5 10 H5 M2.5 12.5 H9" stroke="#A88A80" stroke-width="1"/>
<path d="M4 13 Q6 8 10 7 L15 9 L14 14 Q9 14 4 13 Z" fill="#C8502A"/>
<path d="M6 11 L12.5 0.5" stroke="#222" stroke-width="1.6"/></svg>
<svg style="left:901px;top:625px" width="16" height="16"><defs><linearGradient id="fl" x1="0" y1="0" x2="1" y2="0"><stop offset="0" stop-color="#3A3A3A"/><stop offset="0.5" stop-color="#9A9A9A"/><stop offset="1" stop-color="#3A3A3A"/></linearGradient></defs>
<path d="M0.5 0.5 H15.5 V15.5 H0.5 Z" fill="url(#fl)" stroke="#333" stroke-width="1"/>
<rect x="3.5" y="1" width="9" height="6.5" fill="#D8D8D8"/><rect x="3.5" y="1" width="9" height="2" fill="#F4F4F4"/>
<rect x="3" y="10" width="10" height="5.5" fill="#050505"/><rect x="4.8" y="11" width="1.8" height="4" fill="#C8C8C8"/><rect x="9.5" y="11" width="1.8" height="4" fill="#C8C8C8"/></svg>
<svg style="left:1218px;top:625px" width="17" height="17"><path d="M2 3 L15 15 M15 2.5 L2.5 15" stroke="#E81818" stroke-width="3.6" stroke-linecap="round"/><path d="M2.5 3.5 L14 14" stroke="#FF6A6A" stroke-width="1"/></svg>
</body></html>
